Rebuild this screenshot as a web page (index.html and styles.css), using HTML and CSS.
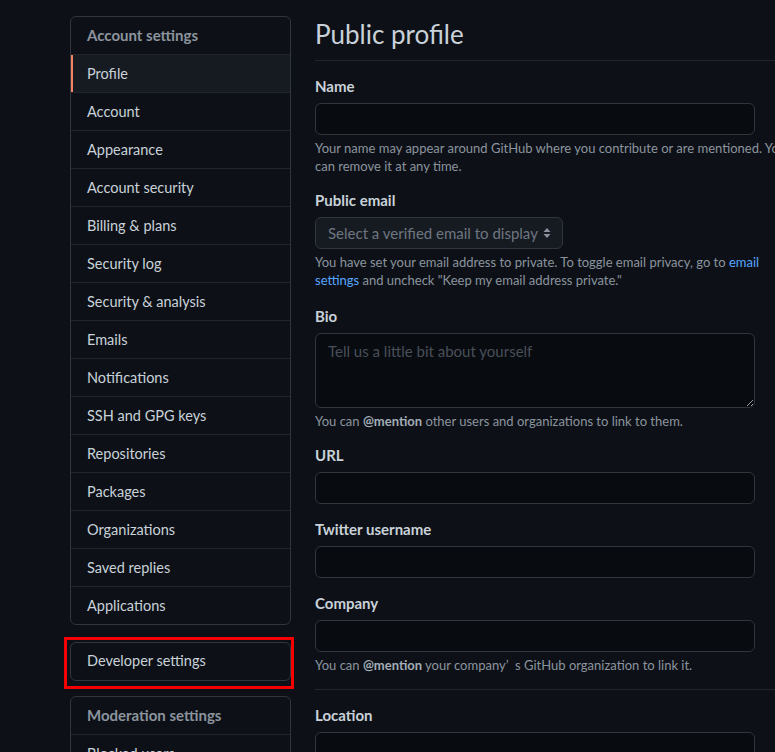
FILE: index.html
```html
<!DOCTYPE html>
<html lang="en">
<head>
<meta charset="utf-8">
<title>Public profile</title>
<link rel="stylesheet" href="styles.css">
</head>
<body>
<div class="page">
  <aside class="sidebar">
    <nav class="menu">
      <div class="menu-heading">Account settings</div>
      <a class="menu-item selected">Profile</a>
      <a class="menu-item">Account</a>
      <a class="menu-item">Appearance</a>
      <a class="menu-item">Account security</a>
      <a class="menu-item">Billing &amp; plans</a>
      <a class="menu-item">Security log</a>
      <a class="menu-item">Security &amp; analysis</a>
      <a class="menu-item">Emails</a>
      <a class="menu-item">Notifications</a>
      <a class="menu-item">SSH and GPG keys</a>
      <a class="menu-item">Repositories</a>
      <a class="menu-item">Packages</a>
      <a class="menu-item">Organizations</a>
      <a class="menu-item">Saved replies</a>
      <a class="menu-item">Applications</a>
    </nav>
    <div class="highlight">
      <nav class="menu">
        <a class="menu-item first">Developer settings</a>
      </nav>
    </div>
    <nav class="menu">
      <div class="menu-heading">Moderation settings</div>
      <a class="menu-item">Blocked users</a>
    </nav>
  </aside>
  <main class="main">
    <h2 class="title">Public profile</h2>
    <form class="form">
      <div class="group">
        <label class="label">Name</label>
        <input class="input" type="text">
        <p class="note">Your name may appear around GitHub where you contribute or are mentioned. You can remove it at any time.</p>
      </div>
      <div class="group group-email">
        <label class="label">Public email</label>
        <div class="select">
          <span>Select a verified email to display</span>
          <svg class="caret" width="8" height="12" viewBox="0 0 8 12"><path d="M4 1 L7.5 5 H0.5 Z M4 11 L0.5 7 H7.5 Z" fill="#8b949e"/></svg>
        </div>
        <p class="note">You have set your email address to private. To toggle email privacy, go to <a class="link">email settings</a> and uncheck "Keep my email address private."</p>
      </div>
      <div class="group">
        <label class="label">Bio</label>
        <textarea class="textarea" placeholder="Tell us a little bit about yourself"></textarea>
        <p class="note">You can <strong>@mention</strong> other users and organizations to link to them.</p>
      </div>
      <div class="group">
        <label class="label">URL</label>
        <input class="input" type="text">
      </div>
      <div class="group">
        <label class="label">Twitter username</label>
        <input class="input" type="text">
      </div>
      <div class="group">
        <label class="label">Company</label>
        <input class="input" type="text">
        <p class="note">You can <strong>@mention</strong> your company’&nbsp;&nbsp;s GitHub organization to link it.</p>
      </div>
      <hr class="rule">
      <div class="group">
        <label class="label">Location</label>
        <input class="input" type="text">
      </div>
    </form>
  </main>
</div>
</body>
</html>
```

FILE: styles.css
```css
* { box-sizing: border-box; }
html, body {
  margin: 0;
  background: #0d1117;
  overflow: hidden;
  height: 752px;
}
body {
  font-family: Lato, "Noto Sans", sans-serif;
  color: #c9d1d9;
  font-size: 14px;
}
.page {
  display: flex;
  gap: 24px;
  padding: 16px 0 0 70px;
  width: 1000px;
}
.sidebar {
  width: 221px;
  flex: none;
  display: flex;
  flex-direction: column;
}
.menu {
  border: 1px solid #30363d;
  border-radius: 6px;
  display: flex;
  flex-direction: column;
  overflow: hidden;
}
.menu-heading {
  height: 37px;
  line-height: 37px;
  padding-left: 16px;
  font-weight: 700;
  color: #8b949e;
  font-size: 15px;
}
.menu-item {
  display: block;
  height: 38px;
  line-height: 37px;
  padding-left: 16px;
  border-top: 1px solid #21262d;
  color: #c9d1d9;
  font-size: 14.5px;
}
.menu-item.first { border-top: none; height: 37px; line-height: 36px; }
.menu-item.selected {
  background: #161b22;
  box-shadow: inset 2px 0 0 #f78166;
}
.highlight {
  position: relative;
  margin: 17px 0 15px;
}
.highlight::after {
  content: "";
  position: absolute;
  left: -6px;
  top: -5px;
  right: -3px;
  bottom: -8px;
  border: 3px solid #f50000;
  pointer-events: none;
}
.main {
  width: 480px;
  flex: none;
}
.title {
  margin: 0;
  font-size: 26px;
  font-weight: 400;
  line-height: 36px;
  padding-bottom: 8px;
  border-bottom: 1px solid #21262d;
  color: #c9d1d9;
}
.form { padding-top: 15px; }
.group { margin-bottom: 15px; }
.group-email { margin-bottom: 17px; }
.label {
  display: block;
  font-weight: 700;
  font-size: 15px;
  line-height: 20px;
  margin-bottom: 7px;
  color: #c9d1d9;
}
.input {
  display: block;
  width: 440px;
  height: 32px;
  background: #080b10;
  border: 1px solid #30363d;
  border-radius: 6px;
  color: #c9d1d9;
  font: inherit;
  padding: 0 12px;
  outline: none;
}
.select {
  width: 248px;
  height: 32px;
  display: flex;
  align-items: center;
  justify-content: space-between;
  padding: 0 11px 0 12px;
  background: #161b22;
  border: 1px solid #30363d;
  border-radius: 6px;
  color: #6e7681;
  font-size: 15px;
}
.caret { flex: none; }
.textarea {
  display: block;
  width: 440px;
  height: 75px;
  background: #080b10;
  border: 1px solid #30363d;
  border-radius: 6px;
  color: #c9d1d9;
  font: inherit;
  font-size: 15px;
  padding: 8px 12px;
  outline: none;
}
.textarea::placeholder { color: #484f58; }
.note {
  margin: 4px 0 0;
  font-size: 13px;
  line-height: 18px;
  color: #8b949e;
  width: 480px;
}
.note strong { color: #a3adb8; font-weight: 700; }
.link { color: #58a6ff; }
.rule {
  border: 0;
  border-top: 1px solid #21262d;
  margin: 0 0 15px;
  width: 480px;
}
```
